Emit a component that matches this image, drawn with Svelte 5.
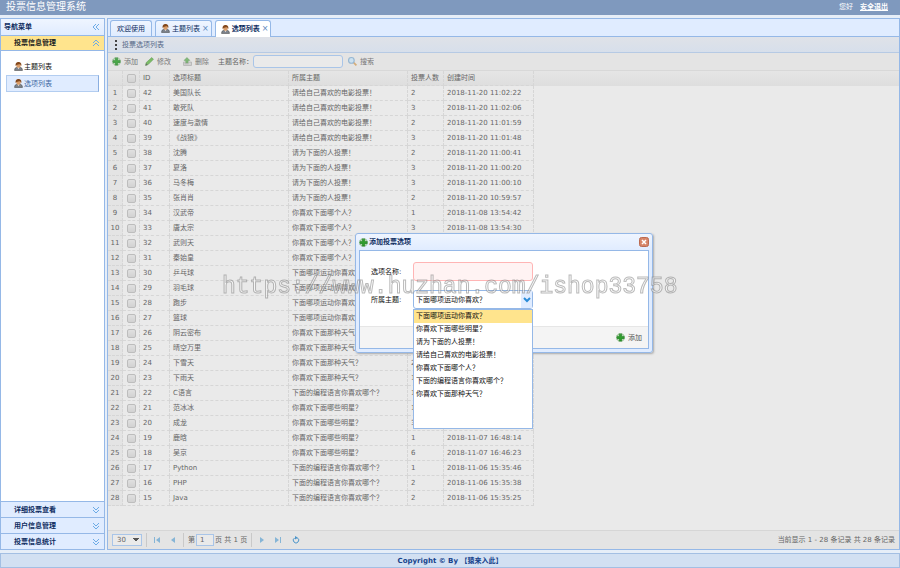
<script lang="ts">
    type Item = { id: number; title: string; subject: string; votes: number; created: string };

    const subjects = [
        '下面哪项运动你喜欢？',
        '你喜欢下面哪些明星？',
        '请为下面的人投票！',
        '请给自己喜欢的电影投票！',
        '你喜欢下面哪个人？',
        '下面的编程语言你喜欢哪个？',
        '你喜欢下面那种天气？'
    ];
    const [sport, star, person, movie, figure, language, weather] = subjects;

    const items: Item[] = [
        { id: 42, title: '美国队长', subject: movie, votes: 2, created: '2018-11-20 11:02:22' },
        { id: 41, title: '敢死队', subject: movie, votes: 3, created: '2018-11-20 11:02:06' },
        { id: 40, title: '速度与激情', subject: movie, votes: 2, created: '2018-11-20 11:01:59' },
        { id: 39, title: '《战狼》', subject: movie, votes: 3, created: '2018-11-20 11:01:48' },
        { id: 38, title: '沈腾', subject: person, votes: 2, created: '2018-11-20 11:00:41' },
        { id: 37, title: '夏洛', subject: person, votes: 3, created: '2018-11-20 11:00:20' },
        { id: 36, title: '马冬梅', subject: person, votes: 3, created: '2018-11-20 11:00:10' },
        { id: 35, title: '张肖肖', subject: person, votes: 2, created: '2018-11-20 10:59:57' },
        { id: 34, title: '汉武帝', subject: figure, votes: 1, created: '2018-11-08 13:54:42' },
        { id: 33, title: '唐太宗', subject: figure, votes: 3, created: '2018-11-08 13:54:30' },
        { id: 32, title: '武则天', subject: figure, votes: 2, created: '2018-11-08 13:54:18' },
        { id: 31, title: '秦始皇', subject: figure, votes: 2, created: '2018-11-08 13:54:05' },
        { id: 30, title: '乒乓球', subject: sport, votes: 3, created: '2018-11-07 16:52:40' },
        { id: 29, title: '羽毛球', subject: sport, votes: 1, created: '2018-11-07 16:52:28' },
        { id: 28, title: '跑步', subject: sport, votes: 2, created: '2018-11-07 16:52:11' },
        { id: 27, title: '篮球', subject: sport, votes: 4, created: '2018-11-07 16:51:58' },
        { id: 26, title: '阴云密布', subject: weather, votes: 1, created: '2018-11-07 16:50:47' },
        { id: 25, title: '晴空万里', subject: weather, votes: 3, created: '2018-11-07 16:50:31' },
        { id: 24, title: '下雪天', subject: weather, votes: 2, created: '2018-11-07 16:50:16' },
        { id: 23, title: '下雨天', subject: weather, votes: 1, created: '2018-11-07 16:50:02' },
        { id: 22, title: 'C语言', subject: language, votes: 1, created: '2018-11-07 16:49:20' },
        { id: 21, title: '范冰冰', subject: star, votes: 1, created: '2018-11-07 16:48:45' },
        { id: 20, title: '成龙', subject: star, votes: 3, created: '2018-11-07 16:48:30' },
        { id: 19, title: '鹿晗', subject: star, votes: 1, created: '2018-11-07 16:48:14' },
        { id: 18, title: '吴京', subject: star, votes: 6, created: '2018-11-07 16:46:23' },
        { id: 17, title: 'Python', subject: language, votes: 1, created: '2018-11-06 15:35:46' },
        { id: 16, title: 'PHP', subject: language, votes: 2, created: '2018-11-06 15:35:38' },
        { id: 15, title: 'Java', subject: language, votes: 2, created: '2018-11-06 15:35:25' }
    ];

    const collapsed = ['详细投票查看', '用户信息管理', '投票信息统计'];

    let selected = $state(sport);
    let listOpen = $state(true);
    let dialogOpen = $state(true);

    function choose(subject: string) {
        selected = subject;
        listOpen = false;
    }
</script>

{#snippet user()}
    <svg class="icon" viewBox="0 0 16 16" aria-hidden="true">
        <path d="M1 15c0-4 2-6 7-6s7 2 7 6z" fill="#7d848e" stroke="#454545" />
        <path d="M6 9l2 4 2-4z" fill="#f5e8dc" />
        <circle cx="8" cy="6" r="4" fill="#d99c68" />
        <path d="M3 7C2 2 5 0 8 0s6 2 5 7c-1-2-2-3-4-3-2 1-4 0-6 3z" fill="#84481b" />
    </svg>
{/snippet}

{#snippet plus()}
    <svg class="icon" viewBox="0 0 16 16" aria-hidden="true">
        <circle cx="8" cy="8" r="7" fill="#cfe6ca" stroke="#5d9a58" stroke-width="1.5" stroke-dasharray="3 1" />
        <path d="M6 2h4v4h4v4h-4v4H6v-4H2V6h4z" fill="#2f9e2c" stroke="#16751a" />
    </svg>
{/snippet}

{#snippet chevrons(d: string)}
    <svg class="chevrons" viewBox="0 0 8 8" aria-hidden="true">
        <path {d} fill="none" stroke="#6cabe6" />
    </svg>
{/snippet}

<div class="page">
    <header class="top">
        <h1>投票信息管理系统</h1>
        <div class="account"><span>您好</span><a href="#logout">安全退出</a></div>
    </header>

    <div class="main">
        <nav class="side">
            <div class="side-head">
                <span>导航菜单</span>
                {@render chevrons('M4 1L1 4l3 3M7 1L4 4l3 3')}
            </div>
            <button class="group active">
                <span>投票信息管理</span>
                {@render chevrons('M1 4l3-3 3 3M1 7l3-3 3 3')}
            </button>
            <div class="tree">
                <a href="#subjects">{@render user()}主题列表</a>
                <a href="#options" class="current">{@render user()}选项列表</a>
            </div>
            {#each collapsed as name}
                <button class="group">
                    <span>{name}</span>
                    {@render chevrons('M1 1l3 3 3-3M1 4l3 3 3-3')}
                </button>
            {/each}
        </nav>

        <main class="center">
            <div class="tabs" role="tablist">
                <button class="tab" role="tab" aria-selected="false">欢迎使用</button>
                <button class="tab" role="tab" aria-selected="false">
                    {@render user()}主题列表<span class="close">×</span>
                </button>
                <button class="tab selected" role="tab" aria-selected="true">
                    {@render user()}选项列表<span class="close">×</span>
                </button>
            </div>

            <div class="panel-title">
                <svg class="dots" viewBox="0 0 4 10" aria-hidden="true">
                    <path d="M1 0h2v2H1zM1 4h2v2H1zM1 8h2v2H1z" fill="#444" />
                </svg>
                投票选项列表
            </div>

            <div class="toolbar">
                <button class="tool" onclick={() => (dialogOpen = true)}>{@render plus()}添加</button>
                <button class="tool">
                    <svg class="icon" viewBox="0 0 16 16" aria-hidden="true">
                        <path d="M1 15l1-5L12 1l3 3L6 13z" fill="#69b451" stroke="#4a8f39" />
                        <path d="M1 15l1-4 3 3z" fill="#555" />
                    </svg>修改
                </button>
                <button class="tool remove">
                    <svg class="icon" viewBox="0 0 16 16" aria-hidden="true">
                        <path d="M1 9h14v6H1z" fill="#d2d2d2" stroke="#929292" />
                        <path d="M3 12h7" stroke="#888" />
                        <path d="M7 1l5 5H9v4H5V6H2z" fill="#70b266" stroke="#569550" />
                    </svg>删除
                </button>
                <label for="keyword">主题名称：</label>
                <input id="keyword" class="keyword" type="text" />
                <button class="tool">
                    <svg class="icon" viewBox="0 0 16 16" aria-hidden="true">
                        <path d="M10 10l5 5" stroke="#d3a467" stroke-width="3" />
                        <circle cx="6" cy="6" r="5" fill="#c8e1f3" stroke="#89afce" stroke-width="2" />
                    </svg>搜索
                </button>
            </div>

            <div class="grid">
                <table>
                    <colgroup>
                        <col class="c-num" /><col class="c-check" /><col class="c-id" /><col class="c-text" />
                        <col class="c-text" /><col class="c-votes" /><col class="c-time" />
                    </colgroup>
                    <thead>
                        <tr>
                            <th></th>
                            <th class="check"><input type="checkbox" aria-label="全选" /></th>
                            <th>ID</th>
                            <th>选项标题</th>
                            <th>所属主题</th>
                            <th>投票人数</th>
                            <th>创建时间</th>
                        </tr>
                    </thead>
                    <tbody>
                        {#each items as item, i (item.id)}
                            <tr>
                                <td class="num">{i + 1}</td>
                                <td class="check"><input type="checkbox" aria-label={item.title} /></td>
                                <td>{item.id}</td>
                                <td>{item.title}</td>
                                <td>{item.subject}</td>
                                <td>{item.votes}</td>
                                <td>{item.created}</td>
                            </tr>
                        {/each}
                    </tbody>
                </table>
            </div>

            <div class="pager">
                <select class="size" aria-label="每页记录数">
                    <option>30</option>
                    <option>50</option>
                </select>
                <i></i>
                <button aria-label="首页"><svg viewBox="0 0 8 8"><path d="M1 1h1v6H1zM7 1v6L3 4z" /></svg></button>
                <button aria-label="上一页"><svg viewBox="0 0 8 8"><path d="M6 1v6L2 4z" /></svg></button>
                <i></i>
                <label for="pageno">第</label>
                <input id="pageno" type="text" value="1" />
                <span>页 共 1 页</span>
                <i></i>
                <button aria-label="下一页"><svg viewBox="0 0 8 8"><path d="M2 1v6l4-3z" /></svg></button>
                <button aria-label="尾页"><svg viewBox="0 0 8 8"><path d="M6 1h1v6H6zM1 1v6l4-3z" /></svg></button>
                <button aria-label="刷新" class="reload">
                    <svg viewBox="0 0 8 8">
                        <path d="M2.5 2A2.7 2.7 0 1 0 5.5 2" class="ring" />
                        <path d="M3 0l3 1.7L3 3.4z" class="tip" />
                    </svg>
                </button>
                <span class="summary">当前显示 1 - 28 条记录 共 28 条记录</span>
            </div>
        </main>
    </div>

    <footer class="bottom">Copyright © By 【猿来入此】</footer>

    {#if dialogOpen}
        <div class="dialog" role="dialog" aria-labelledby="dialog-title">
            <div class="dialog-head">
                {@render plus()}
                <span id="dialog-title">添加投票选项</span>
                <button class="dialog-close" aria-label="关闭" onclick={() => (dialogOpen = false)}>
                    <svg viewBox="0 0 10 10">
                        <rect x="0.5" y="0.5" width="9" height="9" rx="2" fill="#d78568" stroke="#bb6a50" />
                        <path d="M3 3l4 4M7 3L3 7" stroke="#fff" stroke-width="1.5" />
                    </svg>
                </button>
            </div>
            <div class="dialog-body">
                <form class="fields">
                    <label for="name">选项名称:</label>
                    <input id="name" class="invalid" type="text" />
                    <label for="subject">所属主题:</label>
                    <div class="combo">
                        <select id="subject" bind:value={selected}>
                            {#each subjects as subject}
                                <option>{subject}</option>
                            {/each}
                        </select>
                        <button type="button" class="arrow" aria-label="展开" onclick={() => (listOpen = !listOpen)}>
                            <svg viewBox="0 0 8 6"><path d="M1 1l3 3 3-3" /></svg>
                        </button>
                        {#if listOpen}
                            <div class="options" role="listbox">
                                {#each subjects as subject}
                                    <button
                                        type="button"
                                        role="option"
                                        aria-selected={subject === selected}
                                        class:picked={subject === selected}
                                        onclick={() => choose(subject)}
                                    >{subject}</button>
                                {/each}
                            </div>
                        {/if}
                    </div>
                </form>
                <div class="dialog-foot">
                    <button class="tool">{@render plus()}添加</button>
                </div>
            </div>
        </div>
    {/if}

    <div class="watermark">https://www.huzhan.com/ishop33758</div>
</div>

<style>
    :global(body) {
        margin: 0;
    }

    .page {
        position: relative;
        box-sizing: border-box;
        min-height: 100vh;
        display: flex;
        flex-direction: column;
        background: #e6eef8;
        color: #666;
        font: 7px/14px "DejaVu Sans", "Noto Sans CJK SC", sans-serif;
    }

    .page * {
        box-sizing: border-box;
    }

    button,
    input,
    select {
        margin: 0;
        padding: 0;
        border: 0;
        background: none;
        color: inherit;
        font: inherit;
        white-space: nowrap;
    }

    input[type='text'] {
        min-width: 0;
        border: 1px solid #a9c5e8;
    }

    select {
        appearance: none;
    }

    svg {
        display: block;
        flex: none;
    }

    .icon {
        width: 9px;
        height: 9px;
    }

    .chevrons {
        width: 8px;
        height: 8px;
    }

    .top {
        height: 15px;
        padding: 0 12px 2px 6px;
        display: flex;
        align-items: center;
        justify-content: space-between;
        background: #7f99be;
        color: #fff;
    }

    .top h1 {
        margin: 0;
        font-size: 10px;
        line-height: 14px;
        font-weight: normal;
    }

    .account {
        display: flex;
        gap: 7px;
    }

    .account a {
        color: #fff;
        font-weight: bold;
    }

    .main {
        flex: 1;
        display: flex;
        gap: 2px;
        padding: 3px 0;
    }

    .side {
        width: 105px;
        flex: none;
        display: flex;
        flex-direction: column;
        border: 1px solid #95b8e7;
        background: #fff;
        color: #0e2d5f;
        font-weight: bold;
    }

    .side-head,
    .group {
        height: 16px;
        padding: 0 4px 0 13px;
        display: flex;
        align-items: center;
        justify-content: space-between;
        border-top: 1px solid #95b8e7;
        background: #e0ecff;
        text-align: left;
    }

    .side-head {
        padding-left: 3px;
        border-top: 0;
        background: linear-gradient(#eff5ff, #e0ecff);
    }

    .group.active {
        border-bottom: 1px solid #95b8e7;
        background: #ffe48d;
        color: #222;
    }

    .tree {
        flex: 1;
        padding: 7px 5px;
        font-weight: normal;
    }

    .tree a {
        height: 17px;
        padding-left: 7px;
        display: flex;
        align-items: center;
        gap: 1px;
        border: 1px solid transparent;
        color: #111;
        text-decoration: none;
    }

    .tree a.current {
        border-color: #b3cdf0;
        border-right-color: #8aaee0;
        background: #e0ecff;
        color: #416aa3;
    }

    .center {
        flex: 1;
        min-width: 0;
        display: flex;
        flex-direction: column;
        border: 1px solid #95b8e7;
        background: #eaeaea;
    }

    .tabs {
        height: 18px;
        padding: 1px 2px 0;
        display: flex;
        gap: 3px;
        border-bottom: 1px solid #95b8e7;
        background: #e0ecff;
        color: #0e2d5f;
    }

    .tab {
        height: 16px;
        padding: 0 6px;
        display: flex;
        align-items: center;
        gap: 2px;
        border: 1px solid #95b8e7;
        border-bottom: 0;
        border-radius: 3px 3px 0 0;
        background: linear-gradient(#eff5ff, #e0ecff);
    }

    .tab:has(.close) {
        padding: 0 2px 0 5px;
    }

    .tab.selected {
        height: 17px;
        background: #fff;
        font-weight: bold;
    }

    .close {
        color: #5b87bd;
        font-size: 8px;
        font-weight: normal;
    }

    .panel-title {
        height: 16px;
        padding-left: 6px;
        display: flex;
        align-items: center;
        gap: 4px;
        border-bottom: 1px solid #b6cae4;
        background: linear-gradient(#dfe2e8, #d7dfeb);
        color: #566a88;
    }

    .dots {
        width: 4px;
        height: 10px;
    }

    .toolbar {
        height: 18px;
        padding: 0 4px;
        display: flex;
        align-items: center;
        border-bottom: 1px solid #d8d8d8;
        background: #e4e4e4;
    }

    .tool {
        display: flex;
        align-items: center;
        gap: 3px;
    }

    .toolbar .tool {
        margin-right: 7px;
        opacity: 0.85;
    }

    .toolbar .remove {
        margin: 0 9px 0 5px;
    }

    .keyword {
        width: 90px;
        height: 13px;
        margin-right: 5px;
        border-radius: 3px;
        background: #eaeaea;
    }

    .grid {
        flex: 1;
    }

    table {
        width: 426px;
        table-layout: fixed;
        border-collapse: separate;
        border-spacing: 0;
    }

    .c-num {
        width: 15px;
    }

    .c-check {
        width: 17px;
    }

    .c-id {
        width: 30px;
    }

    .c-text {
        width: 119px;
    }

    .c-votes {
        width: 36px;
    }

    .c-time {
        width: 90px;
    }

    .grid:before {
        content: '';
        display: block;
        height: 15px;
        margin-bottom: -15px;
        background: linear-gradient(#e5e5e5, #dedede);
    }

    th,
    td {
        height: 15px;
        padding: 0 0 0 3px;
        border-right: 1px dashed #d6d6d6;
        border-bottom: 1px dashed #d6d6d6;
        font-weight: normal;
        line-height: 14px;
        text-align: left;
        white-space: nowrap;
    }

    .num,
    .check {
        padding: 0;
        text-align: center;
    }

    .num {
        background: #e4e4e4;
    }

    .check input {
        appearance: none;
        display: block;
        width: 9px;
        height: 9px;
        margin: 0 auto;
        border: 1px solid #bdbdbd;
        border-radius: 2px;
        background: linear-gradient(#e0e0e0, #d2d2d2);
    }

    .pager {
        height: 19px;
        padding: 0 4px;
        display: flex;
        align-items: center;
        gap: 4px;
        border-top: 1px solid #d6d6d6;
        background: #e4e4e4;
    }

    .pager i {
        width: 1px;
        height: 14px;
        background: #c9c9c9;
    }

    .pager button {
        width: 12px;
        display: flex;
        justify-content: center;
    }

    .pager .reload {
        margin-left: 2px;
    }

    .pager svg {
        width: 8px;
        height: 8px;
        fill: #86b5d6;
    }

    .pager .ring {
        fill: none;
        stroke: #4d95c9;
    }

    .pager .tip {
        fill: #4d95c9;
    }

    .size {
        width: 30px;
        height: 12px;
        padding-left: 4px;
        border: 1px solid #a9c5e8;
        background:
            linear-gradient(to bottom left, #555 50%, transparent 50%) 20px 3px / 3px 4px no-repeat,
            linear-gradient(to bottom right, #555 50%, transparent 50%) 23px 3px / 3px 4px no-repeat,
            #eaeaea;
        line-height: 10px;
    }

    #pageno {
        width: 18px;
        height: 12px;
        margin: 0 -3px;
        padding-left: 3px;
        background: #eaeaea;
    }

    .summary {
        margin-left: auto;
    }

    .bottom {
        height: 15px;
        border: 1px solid #a3bfe3;
        background: #d2e0f2;
        color: #15428b;
        font-weight: bold;
        line-height: 14px;
        text-align: center;
    }

    .dialog {
        position: absolute;
        left: 355px;
        top: 233px;
        width: 298px;
        padding: 0 3px 3px;
        border: 1px solid #95b8e7;
        border-radius: 3px;
        background: linear-gradient(#eff5ff, #e0ecff 16px);
        box-shadow: 1px 1px 2px #aaa;
        color: #111;
    }

    .dialog-head {
        height: 16px;
        display: flex;
        align-items: center;
        gap: 1px;
        color: #0e2d5f;
        font-weight: bold;
    }

    .dialog-close {
        margin-left: auto;
    }

    .dialog-close svg {
        width: 10px;
        height: 10px;
    }

    .dialog-body {
        border: 1px solid #95b8e7;
        background: #fff;
    }

    .fields {
        height: 75px;
        padding: 11px 11px 0;
        display: grid;
        grid-template-columns: 42px 120px;
        grid-auto-rows: 19px;
        row-gap: 9px;
        align-items: center;
    }

    .fields .invalid {
        height: 19px;
        border-color: #ffb5b5;
        border-radius: 3px;
        background: #fff3f3;
    }

    .combo {
        position: relative;
        height: 19px;
        display: flex;
        border: 1px solid #95b8e7;
        border-radius: 3px;
    }

    .combo select {
        flex: 1;
        min-width: 0;
        padding-left: 2px;
    }

    .arrow {
        width: 11px;
        display: flex;
        align-items: center;
        justify-content: center;
        background: #e0ecff;
    }

    .arrow svg {
        width: 8px;
        height: 6px;
        fill: none;
        stroke: #2a8bd8;
        stroke-width: 2;
    }

    .options {
        position: absolute;
        z-index: 1;
        left: -1px;
        top: 18px;
        width: 120px;
        height: 120px;
        border: 1px solid #95b8e7;
        background: #fff;
    }

    .options button {
        display: block;
        width: 100%;
        height: 13px;
        padding-left: 2px;
        line-height: 13px;
        text-align: left;
    }

    .options .picked {
        background: #ffe48d;
    }

    .dialog-foot {
        height: 22px;
        padding-right: 6px;
        display: flex;
        justify-content: flex-end;
        border-top: 1px solid #e6e6e6;
        background: #f4f4f4;
        color: #555;
    }

    .watermark {
        position: absolute;
        z-index: 2;
        left: 222px;
        top: 274px;
        color: #fff;
        font: 23px/26px "Liberation Mono", monospace;
        -webkit-text-stroke: 1px #8c8c8c;
        opacity: 0.6;
        will-change: opacity;
        pointer-events: none;
    }
</style>
